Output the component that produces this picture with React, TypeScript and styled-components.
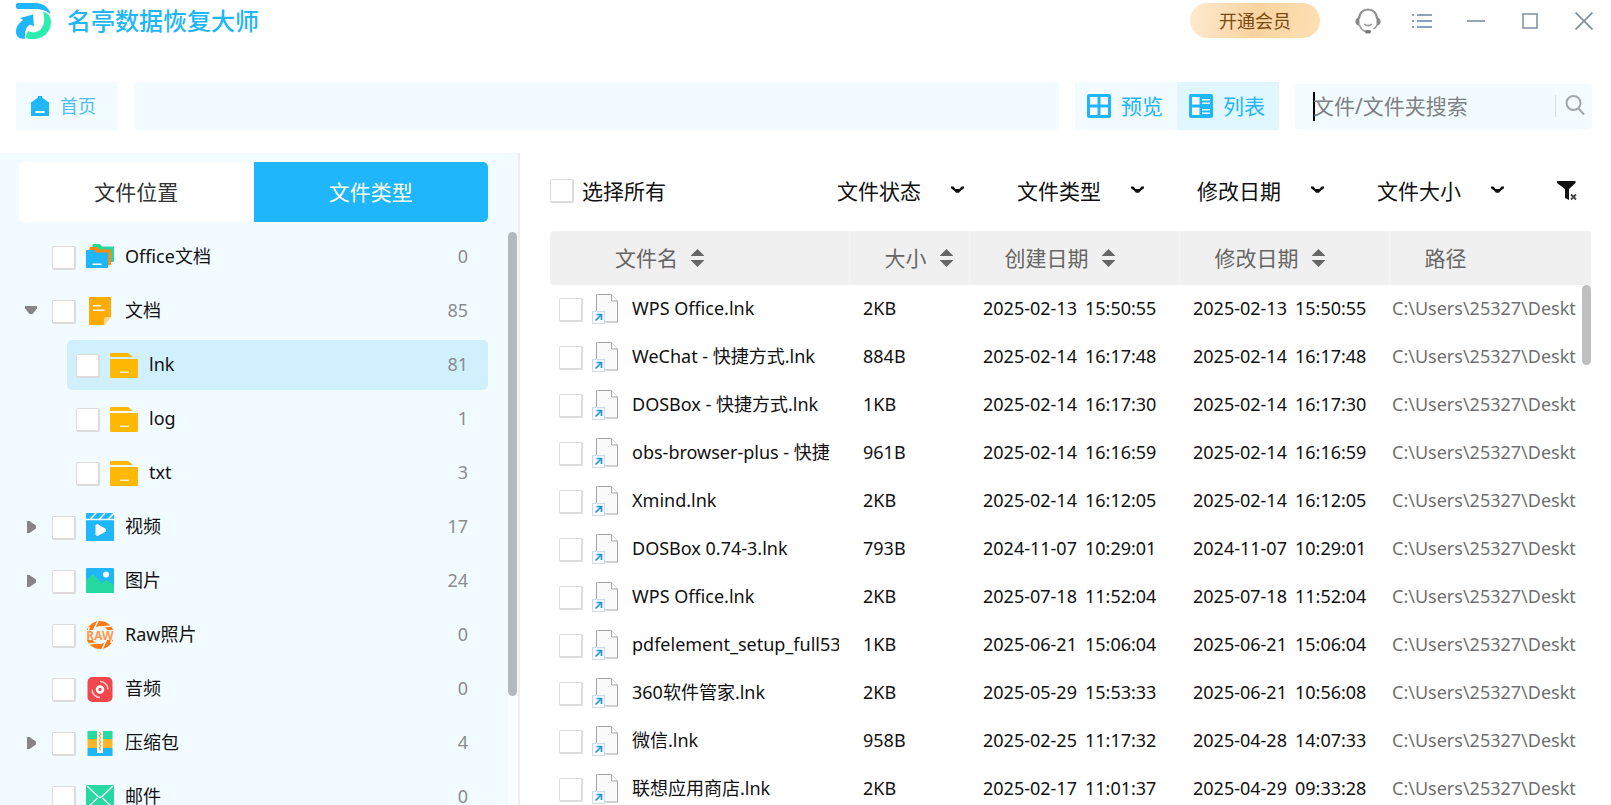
import React, { useState } from "react";
import styled, { createGlobalStyle, css } from "styled-components";

const BLUE = "#20b6fb";
const PALE = "#f2fbff";
const FONT = `"Noto Sans", "Noto Sans CJK SC", sans-serif`;

const GlobalStyle = createGlobalStyle`
  * { box-sizing: border-box; }
  html, body { margin: 0; padding: 0; }
  body { background: #fff; font-family: ${FONT}; font-size: 18px; color: #111; }
  button, input, select { font-family: inherit; margin: 0; }
`;

const Window = styled.div`
  display: flex;
  flex-direction: column;
  height: 100vh;
  overflow: hidden;
`;

/* ---------- title bar ---------- */

const TitleBar = styled.header`
  display: flex;
  align-items: center;
  height: 41px;
  flex: none;
  padding-left: 15px;
`;

const Brand = styled.h1`
  flex: 1;
  margin: 0 0 0 15px;
  font-size: 24px;
  line-height: 32px;
  font-weight: 500;
  color: ${BLUE};
`;

const MemberButton = styled.button`
  width: 130px;
  height: 35px;
  margin-right: 21px;
  padding: 0;
  border: 0;
  border-radius: 18px;
  font-size: 18px;
  line-height: 24px;
  color: #7a4a12;
  background: linear-gradient(100deg, #fdebd0 0%, #fbd3a0 50%, #fde0b4 100%);
`;

const WindowButton = styled.button`
  display: flex;
  align-items: center;
  justify-content: center;
  width: 54px;
  height: 41px;
  padding: 0;
  border: 0;
  background: none;
`;

/* ---------- toolbar ---------- */

const Toolbar = styled.nav`
  display: flex;
  align-items: center;
  gap: 16px;
  flex: none;
  padding: 41px 19px 23px 16px;
`;

const HomeButton = styled.button`
  display: flex;
  align-items: center;
  gap: 11px;
  width: 102px;
  height: 48px;
  padding: 0 0 0 15px;
  border: 0;
  background: ${PALE};
  font-size: 18px;
  line-height: 24px;
  color: #4cbdf5;
`;

const PathBar = styled.div`
  flex: 1;
  height: 48px;
  border-radius: 4px;
  background: ${PALE};
`;

const ViewSwitch = styled.div`
  display: flex;
`;

const ViewButton = styled.button<{ $active?: boolean }>`
  display: flex;
  align-items: center;
  gap: 10px;
  width: 102px;
  height: 48px;
  padding: 0 0 0 12px;
  border: 0;
  background: ${(p) => (p.$active ? "#e0f7ff" : PALE)};
  font-size: 21px;
  line-height: 28px;
  color: ${BLUE};
`;

const SearchBox = styled.div`
  display: flex;
  align-items: center;
  width: 297px;
  height: 45px;
  padding: 0 7px 0 18px;
  border-radius: 4px;
  background: ${PALE};
`;

const Caret = styled.span`
  width: 2px;
  height: 29px;
  margin-right: -2px;
  background: #000;
`;

const SearchInput = styled.input`
  flex: 1;
  min-width: 0;
  height: 40px;
  padding: 0;
  border: 0;
  outline: 0;
  background: none;
  font-size: 21px;
  color: #111;
  &::placeholder { color: #7d8184; opacity: 1; }
`;

const SearchButton = styled.button`
  display: flex;
  padding: 0 0 0 9px;
  border: 0;
  border-left: 1px solid #dadfe2;
  background: none;
`;

/* ---------- body ---------- */

const Body = styled.div`
  display: flex;
  flex: 1;
  min-height: 0;
`;

const Sidebar = styled.aside`
  position: relative;
  display: flex;
  flex-direction: column;
  flex: none;
  width: 520px;
  padding-top: 9px;
  border-right: 2px solid #eeeeee;
  background: ${PALE};
`;

const Tabs = styled.div`
  display: flex;
  flex: none;
  height: 60px;
  margin: 0 30px 8px 19px;
  border-radius: 5px;
  overflow: hidden;
`;

const Tab = styled.button<{ $active: boolean }>`
  flex: 1;
  padding: 0;
  border: 0;
  font-size: 21px;
  line-height: 28px;
  color: ${(p) => (p.$active ? "#fff" : "#333")};
  background: ${(p) => (p.$active ? BLUE : "#fff")};
`;

const Tree = styled.ul`
  display: flex;
  flex-direction: column;
  gap: 4px;
  flex: 1;
  min-height: 0;
  margin: 0;
  padding: 2px 30px 0 19px;
  list-style: none;
  overflow: hidden;
`;

const TreeItem = styled.li<{ $child?: boolean; $selected?: boolean }>`
  display: flex;
  align-items: center;
  flex: none;
  height: 50px;
  padding-right: 20px;
  border-radius: 5px;
  ${(p) => p.$child && css`margin-left: 48px; padding-left: 9px;`}
  ${(p) => p.$selected && css`background: #d0f0fe;`}
`;

const Expander = styled.button`
  display: flex;
  align-items: center;
  justify-content: center;
  width: 24px;
  height: 24px;
  margin-right: 9px;
  padding: 0;
  border: 0;
  background: none;
`;

const ItemLabel = styled.label`
  display: flex;
  align-items: center;
  flex: 1;
  gap: 10px;
`;

const ItemText = styled.span`
  padding: 0 0 2px 1px;
  font-size: 18px;
  line-height: 24px;
`;

const Count = styled.span`
  padding-bottom: 2px;
  font-size: 18px;
  line-height: 24px;
  color: #8a8d8f;
`;

const Checkbox = styled.input.attrs({ type: "checkbox" })`
  appearance: none;
  flex: none;
  width: 24px;
  height: 24px;
  border: 1px solid #dcdcdc;
  border-right-width: 2px;
  border-bottom-width: 2px;
  border-radius: 2px;
  background: #fff;
  &:checked { background: ${BLUE}; }
`;

const RowCheckbox = styled(Checkbox)`
  margin-top: 2px;
`;

const SideScroll = styled.div`
  position: absolute;
  top: 79px;
  bottom: 0;
  right: 0;
  width: 10px;
  background: #f8fdff;
`;

const Thumb = styled.div<{ $length: string; $color: string }>`
  width: 9px;
  height: ${(p) => p.$length};
  border-radius: 5px;
  background: ${(p) => p.$color};
`;

/* ---------- file list ---------- */

const Content = styled.main`
  display: flex;
  flex-direction: column;
  flex: 1;
  min-width: 0;
  padding: 0 20px 0 30px;
`;

const FilterBar = styled.div`
  display: flex;
  align-items: center;
  flex: none;
  height: 78px;
  padding-bottom: 2px;
`;

const SelectAll = styled.label`
  display: flex;
  align-items: center;
  flex: 1;
  gap: 8px;
  font-size: 21px;
  line-height: 28px;
`;

const FilterWrap = styled.span`
  display: grid;
  align-items: center;
  width: 127px;
  margin-right: 53px;
  & > * { grid-area: 1 / 1; }
  & > svg { justify-self: end; pointer-events: none; }
`;

const FilterSelect = styled.select`
  appearance: none;
  width: 100%;
  height: 32px;
  padding: 0;
  border: 0;
  outline: 0;
  background: none;
  font-size: 21px;
  line-height: 28px;
  color: #111;
`;

const ClearButton = styled.button`
  display: flex;
  padding: 0 14px 0 0;
  border: 0;
  background: none;
`;

const ListArea = styled.div`
  position: relative;
  flex: 1;
  min-height: 0;
  overflow: hidden;
`;

const ListScroll = styled.div`
  position: absolute;
  top: 54px;
  right: 0;
`;

const Table = styled.table`
  width: 100%;
  table-layout: fixed;
  border-collapse: collapse;
`;

const Col = styled.col<{ $w?: number }>`
  ${(p) => p.$w && css`width: ${p.$w}px;`}
`;

const HeadCell = styled.th<{ $first?: boolean }>`
  height: 54px;
  padding: 0 0 0 ${(p) => (p.$first ? 65 : 35)}px;
  background: #f0f0f0;
  font-weight: 400;
  text-align: left;
  color: #666;
  &:first-child { border-radius: 4px 0 0 4px; }
  & + & { border-left: 1px solid #f4f4f4; }
`;

const HeadLabel = styled.span`
  display: flex;
  align-items: center;
  gap: 13px;
  font-size: 21px;
  line-height: 28px;
`;

const SortButton = styled.button`
  display: flex;
  padding: 0;
  border: 0;
  background: none;
`;

const Cell = styled.td<{ $pad: number; $muted?: boolean }>`
  height: 48px;
  padding: 0 0 2px ${(p) => p.$pad}px;
  font-size: 18px;
  line-height: 24px;
  white-space: nowrap;
  overflow: hidden;
  color: ${(p) => (p.$muted ? "#707070" : "#111")};
`;

const NameCell = styled(Cell)`
  padding-bottom: 0;
`;

const FileLabel = styled.label`
  display: flex;
  align-items: center;
  margin-right: 10px;
`;

const FileIconBox = styled.span`
  display: flex;
  margin: 0 14px 0 9px;
`;

const FileName = styled.span`
  flex: 1;
  min-width: 0;
  padding-bottom: 2px;
  overflow: hidden;
`;

const Stamp = styled.time`
  display: flex;
  gap: 8px;
`;

/* ---------- drawings ---------- */

const Logo = () => (
  <svg width="37" height="38" viewBox="0 0 37 38" aria-hidden="true">
    <path d="M3 1h17c9 0 14 5 15.500 11C31 8.500 26 7 20 7H3C0 7 0 1 3 1z" fill={BLUE} />
    <path d="M28 10c4 0 8 4 8 10 0 10-8 17-17 17-4 0-6 0-8-1 0-3 1-5 2-7 3 2 8 2 12-1 5-5 5-12 3-18z" fill="#2cefaf" />
    <path d="M18 12.500l1 12-4-2c-5 3-5 8-5 14-6 1-9-2-9-7 0-5 3-8 7-11.500l-3-2z" fill={BLUE} />
  </svg>
);

const HeadsetIcon = () => (
  <svg width="26" height="26" viewBox="0 0 26 26" fill="none" aria-hidden="true">
    <path d="M4 11C4 5 8 1.500 13 1.500S22 5 22 11" stroke="#8f8f8f" strokeWidth="2" />
    <path d="M4.500 17c1 3.500 3.500 6 7.500 7M22 17c-.7 2-1.800 3.200-3.500 4" stroke="#9a9a9a" strokeWidth="1.600" />
    <path d="M4.500 9.500v8.200C1.800 17.700.3 15.700.3 13.500s1.500-4 4.200-4zM21.500 9.500v8.200c2.700 0 4.200-2 4.200-4.200s-1.500-4-4.200-4z" fill="#8a8a8a" />
    <path d="M9.500 16c1.500 2.200 5.500 2.200 7 0" stroke="#9a9a9a" strokeWidth="1.800" />
    <rect x="10" y="22" width="6" height="3.500" rx="1.700" fill="#7a7a7a" />
  </svg>
);

const MenuIcon = () => (
  <svg width="20" height="16" viewBox="0 0 20 16" fill="#8ba3b8" aria-hidden="true">
    <path d="M0 1h2v2H0zM5 1h15v2H5zM0 7h2v2H0zM5 7h15v2H5zM0 13h2v2H0zM5 13h15v2H5z" />
  </svg>
);

const MinimizeIcon = () => (
  <svg width="18" height="16" viewBox="0 0 18 16" aria-hidden="true">
    <path d="M0 7h18v2H0z" fill="#94a5b6" />
  </svg>
);

const MaximizeIcon = () => (
  <svg width="16" height="16" viewBox="0 0 16 16" aria-hidden="true">
    <rect x="1" y="1" width="14" height="14" fill="none" stroke="#8497aa" strokeWidth="1.600" />
  </svg>
);

const CloseIcon = () => (
  <svg width="18" height="18" viewBox="0 0 18 18" aria-hidden="true">
    <path d="M.5.5l17 17M17.500.5l-17 17" stroke="#8090a0" strokeWidth="1.700" />
  </svg>
);

const HomeIcon = () => (
  <svg width="18" height="22" viewBox="0 0 18 22" aria-hidden="true">
    <path d="M7 1h4v1.500l7 5V21H0V7.500l7-5z" fill={BLUE} />
    <path d="M4.500 16h9v2h-9z" fill="#fff" />
  </svg>
);

const GridIcon = () => (
  <svg width="24" height="24" viewBox="0 0 24 24" aria-hidden="true">
    <rect width="24" height="24" rx="2" fill={BLUE} />
    <path d="M3 3h7.500v7.500H3zM13.500 3H21v7.500h-7.500zM3 13.500h7.500V21H3zM13.500 13.500H21V21h-7.500z" fill="#fff" />
  </svg>
);

const ListIcon = () => (
  <svg width="24" height="24" viewBox="0 0 24 24" aria-hidden="true">
    <rect width="24" height="24" rx="2" fill={BLUE} />
    <path d="M3 3h7.500v7.500H3zM3 13.500h7.500V21H3zM13 5h8v1.500h-8zM13 8.500h8V10h-8zM13 15h8v1.500h-8zM13 18.500h8V20h-8z" fill="#fff" />
  </svg>
);

const SearchIcon = () => (
  <svg width="20" height="22" viewBox="0 0 20 22" fill="none" stroke="#a2a8ab" strokeWidth="2" aria-hidden="true">
    <circle cx="8.500" cy="8" r="7" />
    <path d="M13.500 13.500l5.500 6" />
  </svg>
);

const ChevronIcon = () => (
  <svg width="13" height="11" viewBox="0 0 13 11" aria-hidden="true">
    <path d="M0 .5h2.500l2 2.500h4l2-2.500H13v1.700l-3 2.300-2 2.300H5L3 4.500 0 2.200z" fill="#111" />
  </svg>
);

const FunnelIcon = () => (
  <svg width="20" height="20" viewBox="0 0 20 20" aria-hidden="true">
    <path d="M0 0h18.500v2L12 8v11l-4-2V8L0 2z" fill="#111" />
    <path d="M14 13.500l5 5M19 13.500l-5 5" stroke="#444" strokeWidth="1.800" />
  </svg>
);

const SortIcon = () => (
  <svg width="13" height="18" viewBox="0 0 13 18" fill="#666" aria-hidden="true">
    <path d="M6.500 0L13 6.500v.5H0v-.5zM6.500 18L13 11.500V11H0v.5z" />
  </svg>
);

const ShortcutIcon = () => (
  <svg width="26" height="30" viewBox="0 0 26 30" fill="none" aria-hidden="true">
    <path d="M4.500.5h15l6 6.500v21h-21z" fill="#fafafa" stroke="#a6a6a6" />
    <path d="M19.500.5V7h6" fill="#fff" stroke="#a6a6a6" />
    <rect x=".5" y="17.500" width="12" height="12" fill="#fff" stroke="#cfdcea" />
    <path d="M3.500 26.500l6-6M4.500 20.500h5V26" stroke="#1f93e6" strokeWidth="1.700" />
  </svg>
);

const ArrowIcon = ({ open }: { open: boolean }) => (
  <svg width="14" height="14" viewBox="0 0 14 14" fill="#858585" aria-hidden="true">
    <path d={open ? "M1 2h12v2.500L8.500 10h-3L1 4.500z" : "M3 1h2.500L12 5.500v3L5.500 13H3z"} />
  </svg>
);

type IconName = "office" | "doc" | "folder" | "video" | "image" | "raw" | "audio" | "zip" | "mail";

const drawings: Record<IconName, React.ReactNode> = {
  office: (
    <>
      <path d="M6.500 2q0-1 1-1h6l3 2.500H28V18q0 1-1 1H6.500z" fill="#26d9a0" />
      <path d="M3.500 5q0-1 1-1h6l3 2.500h11.500V21q0 1-1 1H3.500z" fill="#ff8a0c" />
      <path d="M0 8q0-1 1-1h6.500l3 2.500H22V24q0 1-1 1H1q-1 0-1-1z" fill={BLUE} />
      <path d="M6.500 20.500h9V22h-9z" fill="#fff" />
    </>
  ),
  doc: (
    <>
      <path d="M3 1q0-1 1-1h20q1 0 1 1v19l-7 8H4q-1 0-1-1z" fill="#ffaa05" />
      <path d="M18 28v-6q0-2 2-2h5z" fill="#ffd98a" />
      <path d="M7 8h8v1.500H7zM7 12.500h11.500V14H7z" fill="#fff" />
    </>
  ),
  folder: (
    <>
      <path d="M0 6V3q0-1 1-1h17l5 4z" fill="#ffb803" />
      <path d="M0 8h28v18q0 1-1 1H1q-1 0-1-1z" fill="#ffb803" />
      <path d="M10 20.500h9V22h-9z" fill="#fff0c4" />
    </>
  ),
  video: (
    <>
      <path d="M0 1q0-1 1-1h26q1 0 1 1v26q0 1-1 1H1q-1 0-1-1z" fill={BLUE} />
      <path d="M0 6.500h28M4 6.500L10 0M13 6.500L19 0M22 6.500L28 0" stroke={PALE} strokeWidth="1.600" />
      <path d="M9.500 12l2-1 8.500 5v2.500L11.500 23l-2-1z" fill="#fff" />
    </>
  ),
  image: (
    <>
      <rect y="1" width="28" height="25" rx="1" fill={BLUE} />
      <path d="M0 13l7-6 9 9 4-3.500 8 5.500v7q0 1-1 1H1q-1 0-1-1z" fill="#26d9a0" />
      <circle cx="20" cy="7.500" r="3" fill="#fff" />
    </>
  ),
  raw: (
    <>
      <circle cx="14" cy="14" r="11.500" fill="none" stroke="#ff7a14" strokeWidth="5" />
      <path d="M12 0l-4 8M25 5l-9 1M3 6l-1 8M16 28l4-8M3 23l9-1M25 22l1-8" stroke={PALE} strokeWidth="1.500" />
      <rect y="9" width="28" height="10" fill={PALE} />
      <text x="14" y="18.500" textAnchor="middle" fontSize="12" fontWeight="700" fill="#ff9a4d">RAW</text>
    </>
  ),
  audio: (
    <>
      <rect x="1.500" y="2" width="25" height="25" rx="5" fill="#f2474b" />
      <circle cx="14" cy="14.500" r="3" fill="none" stroke="#fff" strokeWidth="2.600" />
      <path d="M14 6.500a8 8 0 0 1 8 8M14 22.500a8 8 0 0 1-8-8" fill="none" stroke="#ffc9ca" strokeWidth="1.600" />
    </>
  ),
  zip: (
    <>
      <path d="M1.500 2h25v8h-25z" fill="#26d9a0" />
      <path d="M1.500 10h25v9h-25z" fill="#ffb42a" />
      <path d="M1.500 19h25v8h-25z" fill={BLUE} />
      <path d="M11 2h6v22h-6z" fill="#fff" />
      <path d="M13 3l2 2-2 2 2 2-2 2 2 2-2 2 2 2-2 2 2 2" fill="none" stroke="#e8b04a" strokeWidth="1.200" />
    </>
  ),
  mail: (
    <>
      <rect y="2" width="28" height="24" rx="1" fill="#26d9a0" />
      <path d="M1 3l11 10.500q2 1.500 4 0L27 3M1 25l10.500-10M27 25L16.500 15" fill="none" stroke="#fff" strokeWidth="1.300" />
    </>
  ),
};

const TypeIcon = ({ name }: { name: IconName }) => (
  <svg width="28" height="28" viewBox="0 0 28 28" aria-hidden="true">
    {drawings[name]}
  </svg>
);

/* ---------- data ---------- */

type Node = { label: string; icon: IconName; count: number; expand?: "open" | "closed"; child?: boolean };

const nodes: Node[] = [
  { label: "Office文档", icon: "office", count: 0 },
  { label: "文档", icon: "doc", count: 85, expand: "open" },
  { label: "lnk", icon: "folder", count: 81, child: true },
  { label: "log", icon: "folder", count: 1, child: true },
  { label: "txt", icon: "folder", count: 3, child: true },
  { label: "视频", icon: "video", count: 17, expand: "closed" },
  { label: "图片", icon: "image", count: 24, expand: "closed" },
  { label: "Raw照片", icon: "raw", count: 0 },
  { label: "音频", icon: "audio", count: 0 },
  { label: "压缩包", icon: "zip", count: 4, expand: "closed" },
  { label: "邮件", icon: "mail", count: 0 },
];

const files: [string, string, string, string][] = [
  ["WPS Office.lnk", "2KB", "2025-02-13 15:50:55", "2025-02-13 15:50:55"],
  ["WeChat - 快捷方式.lnk", "884B", "2025-02-14 16:17:48", "2025-02-14 16:17:48"],
  ["DOSBox - 快捷方式.lnk", "1KB", "2025-02-14 16:17:30", "2025-02-14 16:17:30"],
  ["obs-browser-plus - 快捷", "961B", "2025-02-14 16:16:59", "2025-02-14 16:16:59"],
  ["Xmind.lnk", "2KB", "2025-02-14 16:12:05", "2025-02-14 16:12:05"],
  ["DOSBox 0.74-3.lnk", "793B", "2024-11-07 10:29:01", "2024-11-07 10:29:01"],
  ["WPS Office.lnk", "2KB", "2025-07-18 11:52:04", "2025-07-18 11:52:04"],
  ["pdfelement_setup_full53", "1KB", "2025-06-21 15:06:04", "2025-06-21 15:06:04"],
  ["360软件管家.lnk", "2KB", "2025-05-29 15:53:33", "2025-06-21 10:56:08"],
  ["微信.lnk", "958B", "2025-02-25 11:17:32", "2025-04-28 14:07:33"],
  ["联想应用商店.lnk", "2KB", "2025-02-17 11:01:37", "2025-04-29 09:33:28"],
];

const filters = ["文件状态", "文件类型", "修改日期", "文件大小"];
const columns = ["文件名", "大小", "创建日期", "修改日期", "路径"];

const DateTime = ({ value }: { value: string }) => {
  const [day, clock] = value.split(" ");
  return (
    <Stamp dateTime={value}>
      <span>{day}</span>
      <span>{clock}</span>
    </Stamp>
  );
};

export default function App() {
  const [tab, setTab] = useState("文件类型");
  const [selected, setSelected] = useState("lnk");
  const [view, setView] = useState("列表");

  return (
    <Window>
      <GlobalStyle />
      <TitleBar>
        <Logo />
        <Brand>名亭数据恢复大师</Brand>
        <MemberButton>开通会员</MemberButton>
        <WindowButton aria-label="客服"><HeadsetIcon /></WindowButton>
        <WindowButton aria-label="菜单"><MenuIcon /></WindowButton>
        <WindowButton aria-label="最小化"><MinimizeIcon /></WindowButton>
        <WindowButton aria-label="最大化"><MaximizeIcon /></WindowButton>
        <WindowButton aria-label="关闭"><CloseIcon /></WindowButton>
      </TitleBar>

      <Toolbar>
        <HomeButton><HomeIcon />首页</HomeButton>
        <PathBar />
        <ViewSwitch>
          <ViewButton $active={view === "预览"} onClick={() => setView("预览")}><GridIcon />预览</ViewButton>
          <ViewButton $active={view === "列表"} onClick={() => setView("列表")}><ListIcon />列表</ViewButton>
        </ViewSwitch>
        <SearchBox>
          <Caret />
          <SearchInput type="text" aria-label="搜索" placeholder="文件/文件夹搜索" />
          <SearchButton aria-label="搜索"><SearchIcon /></SearchButton>
        </SearchBox>
      </Toolbar>

      <Body>
        <Sidebar>
          <Tabs>
            {["文件位置", "文件类型"].map((t) => (
              <Tab key={t} $active={t === tab} onClick={() => setTab(t)}>{t}</Tab>
            ))}
          </Tabs>
          <Tree>
            {nodes.map((n) => (
              <TreeItem key={n.label} $child={n.child} $selected={n.label === selected} onClick={() => setSelected(n.label)}>
                {!n.child && (
                  <Expander aria-label="展开" disabled={!n.expand}>
                    {n.expand && <ArrowIcon open={n.expand === "open"} />}
                  </Expander>
                )}
                <ItemLabel>
                  <RowCheckbox />
                  <TypeIcon name={n.icon} />
                  <ItemText>{n.label}</ItemText>
                </ItemLabel>
                <Count>{n.count}</Count>
              </TreeItem>
            ))}
          </Tree>
          <SideScroll><Thumb $length="81%" $color="#b3babd" /></SideScroll>
        </Sidebar>

        <Content>
          <FilterBar>
            <SelectAll><Checkbox />选择所有</SelectAll>
            {filters.map((f) => (
              <FilterWrap key={f}>
                <FilterSelect aria-label={f}><option>{f}</option></FilterSelect>
                <ChevronIcon />
              </FilterWrap>
            ))}
            <ClearButton aria-label="清除筛选"><FunnelIcon /></ClearButton>
          </FilterBar>

          <ListArea>
            <Table>
              <colgroup>
                <Col $w={299} /><Col $w={120} /><Col $w={210} /><Col $w={210} /><Col />
              </colgroup>
              <thead>
                <tr>
                  {columns.map((c, i) => (
                    <HeadCell key={c} $first={i === 0}>
                      <HeadLabel>
                        {c}
                        {i < 4 && <SortButton aria-label={`${c}排序`}><SortIcon /></SortButton>}
                      </HeadLabel>
                    </HeadCell>
                  ))}
                </tr>
              </thead>
              <tbody>
                {files.map(([name, size, created, modified], i) => (
                  <tr key={i}>
                    <NameCell $pad={9}>
                      <FileLabel>
                        <RowCheckbox />
                        <FileIconBox><ShortcutIcon /></FileIconBox>
                        <FileName>{name}</FileName>
                      </FileLabel>
                    </NameCell>
                    <Cell $pad={14}>{size}</Cell>
                    <Cell $pad={14}><DateTime value={created} /></Cell>
                    <Cell $pad={14}><DateTime value={modified} /></Cell>
                    <Cell $pad={3} $muted>C:\Users\25327\Deskt</Cell>
                  </tr>
                ))}
              </tbody>
            </Table>
            <ListScroll><Thumb $length="80px" $color="#bfbfbf" /></ListScroll>
          </ListArea>
        </Content>
      </Body>
    </Window>
  );
}
